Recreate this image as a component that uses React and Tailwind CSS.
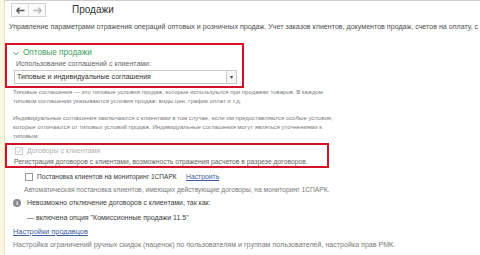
const Arrow = ({ dir, color }) => (
  <svg width="9" height="7" viewBox="0 0 9 7" className={dir === "right" ? "rotate-180" : ""}>
    <path d="M0.5 3.5H8.5M0.5 3.5L3.5 0.8M0.5 3.5L3.5 6.2" stroke={color} strokeWidth="1.3" fill="none" />
  </svg>
);

const Checkbox = ({ checked, faded }) => (
  <span
    className={`flex h-[8px] w-[8px] shrink-0 items-center justify-center border bg-white ${
      faded ? "border-[#cfcfcf]" : "border-[#9a9a9a]"
    }`}
  >
    {checked && (
      <svg width="7" height="6" viewBox="0 0 7 6">
        <path d="M0.8 3L2.8 5L6.3 0.6" stroke="#b5b5b5" strokeWidth="1" fill="none" />
      </svg>
    )}
  </span>
);

const Para = ({ children, className = "" }) => (
  <p className={`whitespace-nowrap leading-[9px] text-[#7a7a7a] ${className}`}>{children}</p>
);

export default function App() {
  return (
    <div
      className="flex h-[255px] w-[480px] overflow-hidden bg-white text-[#3b3b3b]"
      style={{ fontFamily: '"Liberation Sans", Arial, sans-serif' }}
    >
      <div className="w-[5px] shrink-0 border-r border-[#e3dfc4] bg-[#fbf8df]" />
      <div className="flex min-w-0 flex-1 flex-col border-t border-[#cfcfcf]">
        <div className="flex h-[16px] items-center pt-[2px]">
          <div className="ml-[6px] flex h-[14px] w-[35px] border border-[#d2d2d2] bg-[#fafafa]">
            <div className="flex flex-1 items-center justify-center border-r border-[#dedede]">
              <Arrow color="#555" />
            </div>
            <div className="flex flex-1 items-center justify-center">
              <Arrow dir="right" color="#b8b8b8" />
            </div>
          </div>
          <h1 className="ml-[26px] text-[10px] leading-[14px] text-[#333]">Продажи</h1>
        </div>

        <p className="ml-[4px] mt-[6px] whitespace-nowrap text-[7.1px] leading-[9px] text-[#4d4d4d]">
          Управление параметрами отражения операций оптовых и розничных продаж. Учет заказов клиентов, документов продаж, счетов на оплату, с
        </p>

        <div className="mt-[11px] w-[239px] border-2 border-[#d3122a] px-[6px] pb-[2px] pt-[3px]">
          <div className="flex h-[10px] items-center gap-[4px]">
            <svg width="6" height="5" viewBox="0 0 6 5">
              <path d="M0.5 1L3 3.8L5.5 1" stroke="#3fa05e" strokeWidth="1" fill="none" />
            </svg>
            <span className="text-[8.2px] leading-[10px] text-[#3e9e5c]">Оптовые продажи</span>
          </div>
          <div className="ml-[3px] mt-[1px] text-[7px] leading-[9px] text-[#666]">
            Использование соглашений с клиентами:
          </div>
          <div className="ml-[1px] mr-[-1px] mt-[2px] flex h-[14px] items-center border border-[#c8c8c8] bg-white">
            <span className="ml-[2px] flex-1 text-[7.1px] text-[#333]">
              Типовые и индивидуальные соглашения
            </span>
            <span className="flex h-full w-[10px] items-center justify-center border-l border-[#d0d0d0] bg-[#f7f7f7] text-[6px] text-[#444]">
              ▾
            </span>
          </div>
        </div>

        <div className="ml-[8px]">
          <Para className="text-[6px]">
            Типовые соглашения — это типовые условия продаж, которые используются при продажах товаров. В каждом
            <br />
            типовом соглашении указываются условия продаж: виды цен, график оплат и т.д.
          </Para>
          <Para className="mt-[8px] text-[6px]">
            Индивидуальные соглашения заключаются с клиентами в том случае, если им предоставляются особые условия,
            <br />
            которые отличаются от типовых условий продаж. Индивидуальные соглашения могут являться уточнениями к
            <br />
            типовым.
          </Para>
        </div>

        <div className="mt-[2px] w-[324px] border-2 border-[#d3122a] px-[7px] pt-[1px]">
          <div className="flex h-[9px] items-center gap-[4px] pl-[1px]">
            <Checkbox checked faded />
            <span className="text-[7px] leading-[9px] text-[#b0b0b0]">Договоры с клиентами</span>
          </div>
          <p className="mt-[2px] whitespace-nowrap text-[6.8px] leading-[9px] text-[#666]">
            Регистрация договоров с клиентами, возможность отражения расчетов в разрезе договоров.
          </p>
        </div>

        <div className="ml-[20px] mt-[4px] flex h-[9px] items-center">
          <Checkbox />
          <span className="ml-[4px] w-[149px] text-[6.6px] leading-[9px] text-[#3b3b3b]">
            Постановка клиентов на мониторинг 1СПАРК
          </span>
          <span className="text-[6.8px] leading-[9px] text-[#3c5d9e] underline">Настроить</span>
        </div>
        <Para className="ml-[19px] mt-[4px] text-[6.7px]">
          Автоматическая постановка клиентов, имеющих действующие договоры, на мониторинг 1СПАРК.
        </Para>

        <div className="ml-[8px] mt-[4px] flex h-[9px] items-center gap-[6px]">
          <span className="flex h-[8px] w-[8px] items-center justify-center rounded-full bg-[#8c8c8c] text-[6px] font-bold leading-none text-white">
            i
          </span>
          <span className="text-[6.9px] leading-[9px] text-[#3b3b3b]">
            Невозможно отключение договоров с клиентами, так как:
          </span>
        </div>
        <p className="ml-[22px] mt-[6px] text-[7px] leading-[9px] text-[#3b3b3b]">
          — включена опция "Комиссионные продажи 11.5"
        </p>

        <p className="ml-[8px] mt-[5px] text-[7.4px] leading-[9px] text-[#3c5d9e] underline">Настройки продавцов</p>
        <Para className="ml-[8px] mt-[5px] text-[7.1px]">
          Настройка ограничений ручных скидок (наценок) по пользователям и группам пользователей, настройка прав РМК.
        </Para>
      </div>
    </div>
  );
}
